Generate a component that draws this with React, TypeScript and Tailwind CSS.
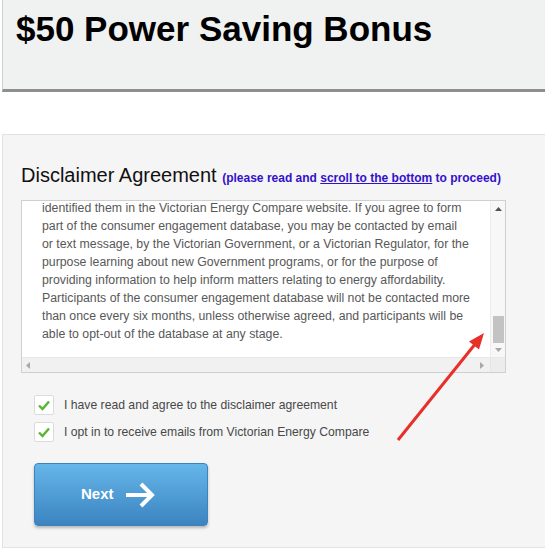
import type { ReactNode } from "react";

const lines = [
  "identified them in the Victorian Energy Compare website. If you agree to form",
  "part of the consumer engagement database, you may be contacted by email",
  "or text message, by the Victorian Government, or a Victorian Regulator, for the",
  "purpose learning about new Government programs, or for the purpose of",
  "providing information to help inform matters relating to energy affordability.",
  "Participants of the consumer engagement database will not be contacted more",
  "than once every six months, unless otherwise agreed, and participants will be",
  "able to opt-out of the database at any stage.",
];

function CheckRow({ children }: { children: ReactNode }) {
  return (
    <div className="flex h-[20px] items-center">
      <span className="flex h-[20px] w-[20px] items-center justify-center rounded-[2px] border border-[#dcdcdc] bg-white">
        <svg width="16" height="16" viewBox="0 0 16 16">
          <path d="M3 8.5 L6.5 12 L13 4.5" fill="none" stroke="#58b532" strokeWidth="2.4" />
        </svg>
      </span>
      <span className="ml-[10px] text-[12.2px] leading-[20px] text-[#484848]">{children}</span>
    </div>
  );
}

export default function App() {
  return (
    <div className="relative h-[552px] w-[545px] overflow-hidden bg-white font-['Liberation_Sans',Arial,sans-serif]">
      {/* Header */}
      <div className="ml-[2px] h-[92px] w-[560px] border-b-[3px] border-l border-b-[#8e8e8e] border-l-[#cfcfcf] bg-[#f0f1f1] pl-[13px] pt-[11px]">
        <h1 className="text-[35px] font-bold leading-[35px] text-black">$50 Power Saving Bonus</h1>
      </div>

      {/* Panel */}
      <div className="ml-[2px] mt-[42px] h-[414px] w-[560px] border border-[#e2e2e2] bg-[#f5f5f5] pl-[18px] pt-[30px]">
        <h2 className="h-[20px] text-[20px] leading-[20px] text-[#111]">
          Disclaimer Agreement{" "}
          <span className="text-[12px] font-bold leading-[12px] text-[#3311cc]">
            (please read and <span className="underline">scroll to the bottom</span> to proceed)
          </span>
        </h2>

        {/* Scroll box */}
        <div className="mt-[15px] flex h-[173px] w-[485px] flex-col border border-[#cfcfcf] bg-white">
          <div className="flex h-[156px]">
            <div className="flex-1 overflow-hidden pl-[20px]">
              <div className="-mt-[2px] text-[12.3px] leading-[18px] text-[#585858]">
                {lines.map((l) => (
                  <div key={l} className="whitespace-nowrap">
                    {l}
                  </div>
                ))}
              </div>
            </div>
            <div className="flex w-[15px] flex-col items-center border-l border-[#ececec] bg-[#f7f7f7]">
              <svg width="7" height="4" viewBox="0 0 7 4" className="mt-[6px]">
                <path d="M0 4 L3.5 0 L7 4 Z" fill="#505050" />
              </svg>
              <div className="mt-[105px] h-[27px] w-[11px] bg-[#c3c3c3]" />
              <svg width="7" height="4" viewBox="0 0 7 4" className="mt-[5px]">
                <path d="M0 0 L3.5 4 L7 0 Z" fill="#a8a8a8" />
              </svg>
            </div>
          </div>
          <div className="flex h-[15px] border-t border-[#e8e8e8]">
            <div className="flex flex-1 items-center justify-between bg-[#f1f1f1] px-[4px]">
              <svg width="4" height="7" viewBox="0 0 4 7">
                <path d="M4 0 L0 3.5 L4 7 Z" fill="#a8a8a8" />
              </svg>
              <svg width="4" height="7" viewBox="0 0 4 7" className="mr-[2px]">
                <path d="M0 0 L4 3.5 L0 7 Z" fill="#a8a8a8" />
              </svg>
            </div>
            <div className="w-[15px] border-l border-[#e4e4e4] bg-[#ececec]" />
          </div>
        </div>

        {/* Checkboxes */}
        <div className="ml-[13px] mt-[22px] flex flex-col gap-[7px]">
          <CheckRow>I have read and agree to the disclaimer agreement</CheckRow>
          <CheckRow>I opt in to receive emails from Victorian Energy Compare</CheckRow>
        </div>

        {/* Next button */}
        <button className="ml-[13px] mt-[21px] flex h-[63px] w-[174px] items-center rounded-[4px] border border-[#3d84bf] bg-gradient-to-b from-[#66b6ea] to-[#3b84c0] pl-[46px] shadow-[0_2px_3px_rgba(0,0,0,0.25)]">
          <span className="text-[15px] font-bold text-white">Next</span>
          <svg width="30" height="26" viewBox="0 0 30 26" className="ml-[11px]">
            <path d="M1 13 H27 M16 2 L27 13 L16 24" fill="none" stroke="white" strokeWidth="4" />
          </svg>
        </button>
      </div>

      {/* Red annotation arrow */}
      <svg className="pointer-events-none absolute left-0 top-0" width="545" height="552">
        <line x1="398" y1="440" x2="476" y2="343" stroke="#e8302a" strokeWidth="3" />
        <path d="M484 333 L479 349.5 L469 341.5 Z" fill="#e8302a" />
      </svg>
    </div>
  );
}
